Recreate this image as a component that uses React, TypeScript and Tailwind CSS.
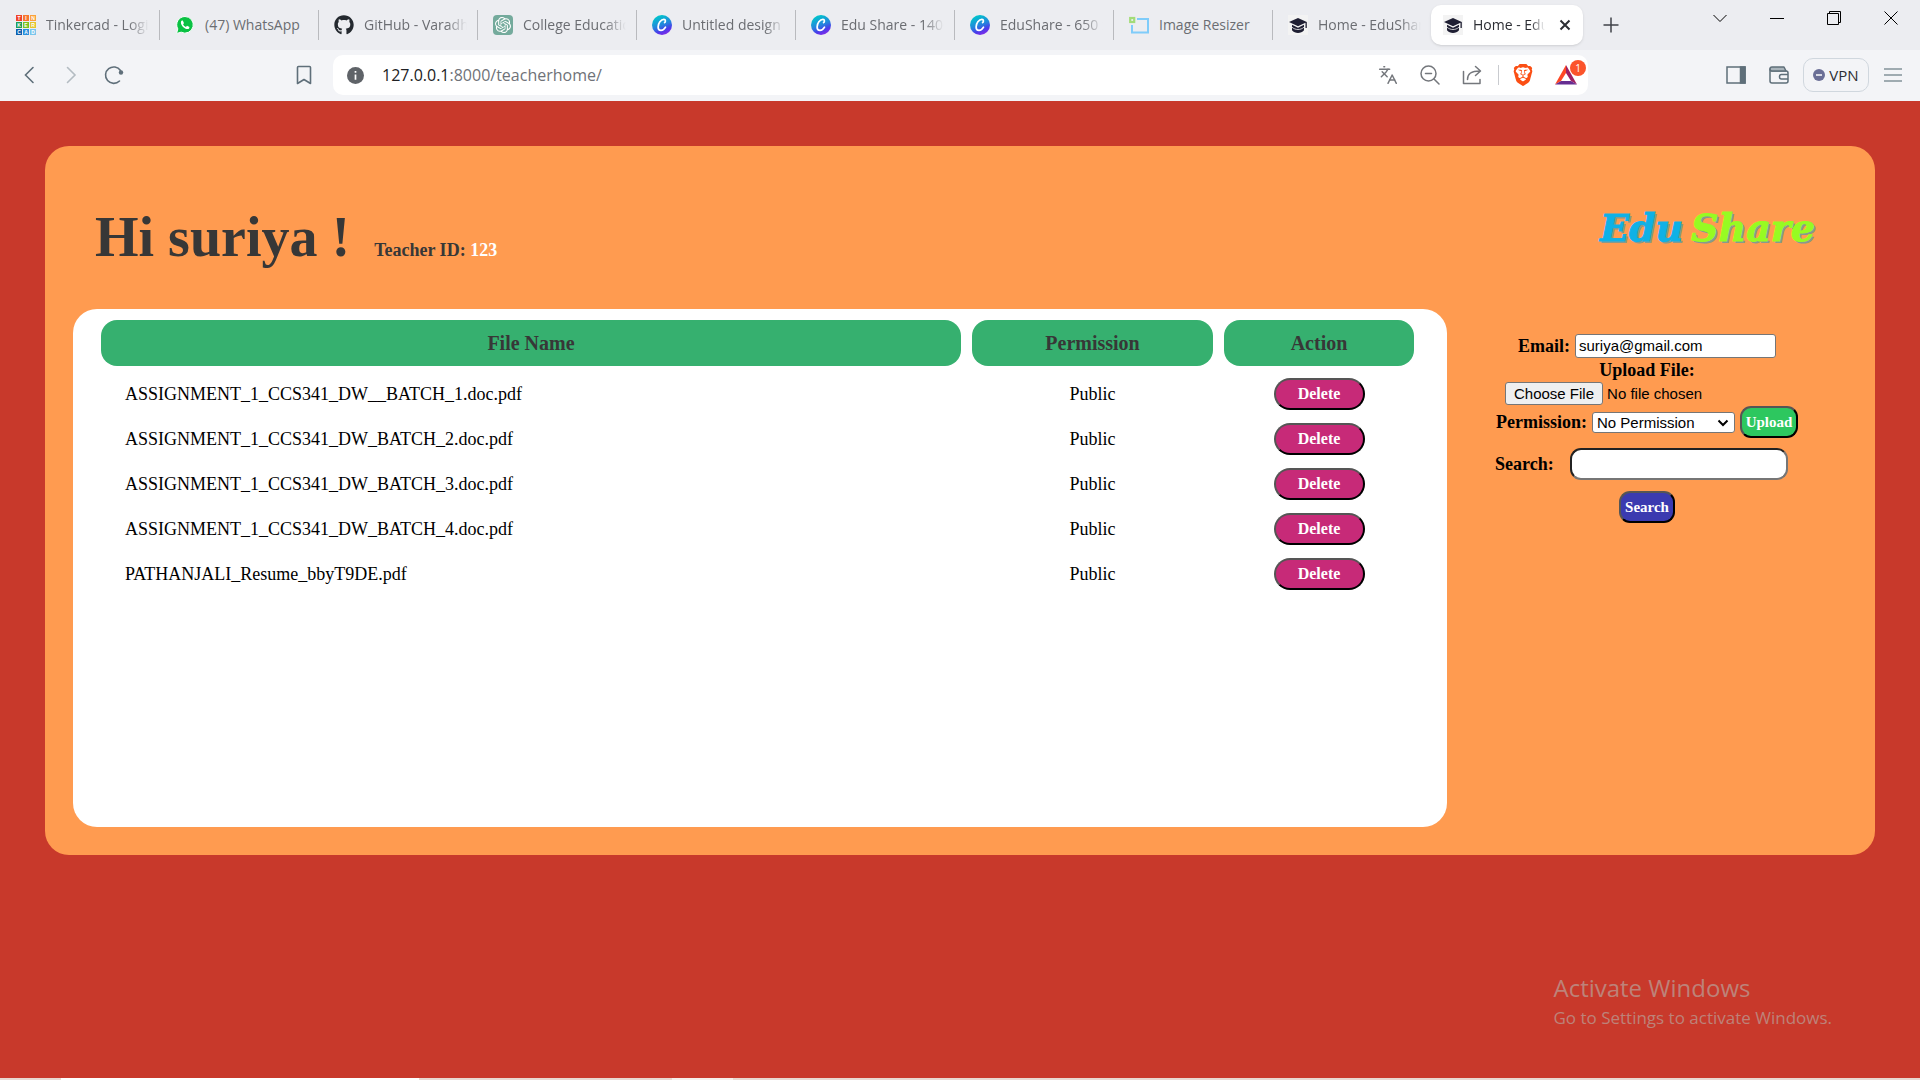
import React from "react";
import { FaGithub } from "react-icons/fa";
import { SiBrave, SiOpenai } from "react-icons/si";
import { Languages } from "lucide-react";

const TINKER: [string, string][] = [
  ["T", "#f0432a"], ["I", "#f7772f"], ["N", "#fba23c"],
  ["K", "#1f9d55"], ["E", "#7cc21e"], ["R", "#e4c62d"],
  ["C", "#0e5fae"], ["A", "#2b8fdc"], ["D", "#79c5ec"],
];

function TinkercadIcon() {
  return (
    <svg viewBox="0 0 20 20" className="size-5 shrink-0" aria-hidden="true">
      {TINKER.map(([letter, color], i) => (
        <g key={letter}>
          <rect x={(i % 3) * 7} y={Math.floor(i / 3) * 7} width="6" height="6" fill={color} />
          <text
            x={(i % 3) * 7 + 3}
            y={Math.floor(i / 3) * 7 + 5}
            fontSize="5"
            fontWeight="700"
            fontFamily="Liberation Sans, sans-serif"
            textAnchor="middle"
            fill="#fff"
          >
            {letter}
          </text>
        </g>
      ))}
    </svg>
  );
}

function WhatsAppIcon() {
  return (
    <svg viewBox="0 0 20 20" className="size-5 shrink-0" aria-hidden="true">
      <path d="M10 1.5a8.3 8.3 0 0 0-7.2 12.4L1.6 18.4l4.6-1.2A8.3 8.3 0 1 0 10 1.5z" fill="#0ac143" stroke="#fff" strokeWidth="1" />
      <path d="M7.3 5.6c-.5 0-1.4.6-1.4 1.9 0 3 3.7 6.6 6.5 6.6 1.3 0 2-.9 2-1.7 0-.3-.1-.5-.3-.6l-1.7-.9c-.3-.1-.5 0-.7.2l-.7.8c-1.3-.5-2.3-1.4-2.9-2.700l.7-.8c.1-.2.1-.4 0-.6l-.8-1.800c-.1-.3-.3-.4-.7-.4z" fill="#fff" />
    </svg>
  );
}

function OpenAiIcon() {
  return (
    <span className="flex size-5 shrink-0 items-center justify-center rounded-sm bg-[#74aa9c] text-white">
      <SiOpenai className="size-4" />
    </span>
  );
}

function CanvaIcon() {
  const id = React.useId();
  return (
    <svg viewBox="0 0 20 20" className="size-5 shrink-0" aria-hidden="true">
      <defs>
        <linearGradient id={id} x1="0.3" y1="0" x2="0.7" y2="1">
          <stop offset="0.05" stopColor="#00c4cc" />
          <stop offset="0.5" stopColor="#2485dd" />
          <stop offset="0.75" stopColor="#4a3bea" />
          <stop offset="1" stopColor="#8a2be8" />
        </linearGradient>
      </defs>
      <circle cx="10" cy="10" r="10" fill={`url(#${id})`} />
      <path
        d="M12.600 7.600c1-.5 1.400-3.300-.7-3.300-3 0-5.800 4.200-5.800 7.600 0 2.200 1.100 3.500 2.900 3.500 2 0 3.600-1.500 4.500-3.200"
        fill="none"
        stroke="#fff"
        strokeWidth="1.700"
        strokeLinecap="round"
      />
    </svg>
  );
}

function ResizerIcon() {
  return (
    <svg viewBox="0 0 20 20" className="size-5 shrink-0" aria-hidden="true" fill="none">
      <path d="M8 4h11v13.500H3V10" stroke="#7fccfa" strokeWidth="2" />
      <rect x="1.200" y="3" width="4" height="4" stroke="#a3dc78" strokeWidth="2.200" />
    </svg>
  );
}

function CapIcon() {
  return (
    <span className="flex size-5 shrink-0 items-center justify-center bg-[#f3f3f3] text-[#1f1f33]">
      <svg viewBox="0 0 20 20" className="size-5" aria-hidden="true" fill="currentColor">
        <path d="M10 3 1 7l9 4.200L17.500 7.800V13h1.300V7L10 3z" />
        <path d="M4 9.800v5.400C5.500 17 7.600 18 10 18s4.500-1 6-2.800V9.800l-6 2.900-6-2.900z" />
        <path d="M4 12.200c1.800 1.600 3.800 2.300 6 2.300s4.200-.7 6-2.300" stroke="#f1f1f1" strokeWidth="0.800" fill="none" />
      </svg>
    </span>
  );
}

const TABS: { label: string; icon: React.ReactNode }[] = [
  { label: "Tinkercad - Login", icon: <TinkercadIcon /> },
  { label: "(47) WhatsApp", icon: <WhatsAppIcon /> },
  { label: "GitHub - Varadha", icon: <FaGithub className="size-5 shrink-0 text-[#24292f]" /> },
  { label: "College Education", icon: <OpenAiIcon /> },
  { label: "Untitled design", icon: <CanvaIcon /> },
  { label: "Edu Share - 1400", icon: <CanvaIcon /> },
  { label: "EduShare - 650 x", icon: <CanvaIcon /> },
  { label: "Image Resizer", icon: <ResizerIcon /> },
  { label: "Home - EduShare", icon: <CapIcon /> },
];

const FADE = "[mask-image:linear-gradient(to_right,black_80%,transparent)]";

function TabStrip() {
  return (
    <div className="flex h-[50px] items-center bg-[#ecedf1] text-sm text-[#6b6d72]">
      {TABS.map((tab, i) => (
        <button
          key={i}
          type="button"
          className={
            "flex h-[30px] w-[159px] min-w-0 items-center gap-2.5 border-l pr-2.5 pl-[15px] text-left " +
            (i > 0 ? "border-[#b9babe]" : "border-transparent")
          }
        >
          {tab.icon}
          <span className={"min-w-0 flex-1 overflow-hidden whitespace-nowrap " + (tab.label.length > 14 ? FADE : "")}>
            {tab.label}
          </span>
        </button>
      ))}
      <div className="flex h-10 w-[152px] min-w-0 items-center gap-2.5 rounded-[10px] bg-white pr-3 pl-3 text-[#2b2d33] shadow-sm">
        <CapIcon />
        <span className={"min-w-0 flex-1 overflow-hidden whitespace-nowrap " + FADE}>Home - EduShare</span>
        <button type="button" aria-label="Close tab" className="ml-1 shrink-0">
          <svg viewBox="0 0 12 12" className="size-3" fill="none" stroke="#2b2d33" strokeWidth="2">
            <path d="M1.500 1.500l9 9M10.500 1.500l-9 9" />
          </svg>
        </button>
      </div>
      <button type="button" aria-label="New tab" className="ml-5">
        <svg viewBox="0 0 16 16" className="size-4" fill="none" stroke="#3f4248" strokeWidth="1.500">
          <path d="M8 .500v15M.500 8h15" />
        </svg>
      </button>
      <div className="ml-auto flex items-center gap-[43px] self-start pt-[11px] pr-[22px] text-black">
        <button type="button" aria-label="Search tabs">
          <svg viewBox="0 0 14 14" className="size-3.5" fill="none" stroke="currentColor">
            <path d="M.500 4l6.500 6.500L13.500 4" />
          </svg>
        </button>
        <button type="button" aria-label="Minimize">
          <svg viewBox="0 0 14 14" className="size-3.5" fill="none" stroke="currentColor">
            <path d="M0 7.500h14" />
          </svg>
        </button>
        <button type="button" aria-label="Restore">
          <svg viewBox="0 0 14 14" className="size-3.5" fill="none" stroke="currentColor">
            <path d="M.500 2.500h11v11H.500zM2.500 2.500v-2h11v11h-2" />
          </svg>
        </button>
        <button type="button" aria-label="Close window">
          <svg viewBox="0 0 14 14" className="size-3.5" fill="none" stroke="currentColor">
            <path d="M.500.500l13 13M13.500.500l-13 13" />
          </svg>
        </button>
      </div>
    </div>
  );
}

function Toolbar() {
  return (
    <div className="flex h-[51px] items-center bg-[#f3f4f7] pb-px text-[#5f6f7a]">
      <button type="button" aria-label="Back" className="ml-5">
        <svg viewBox="0 0 18 18" className="size-[18px]" fill="none" stroke="currentColor" strokeWidth="1.600" strokeLinecap="round">
          <path d="M13 1.500L5.500 9l7.500 7.500" />
        </svg>
      </button>
      <button type="button" aria-label="Forward" className="ml-6 text-[#b4bcc2]">
        <svg viewBox="0 0 18 18" className="size-[18px]" fill="none" stroke="currentColor" strokeWidth="1.600" strokeLinecap="round">
          <path d="M5.500 1.500L13 9l-7.500 7.500" />
        </svg>
      </button>
      <button type="button" aria-label="Reload" className="ml-6">
        <svg viewBox="0 0 20 20" className="size-5" fill="none" stroke="currentColor" strokeWidth="1.600" strokeLinecap="round">
          <path d="M15.500 16A8.200 8.200 0 1 1 16.500 5.500" />
          <circle cx="17" cy="7.500" r="2.200" fill="currentColor" stroke="none" />
        </svg>
      </button>
      <button type="button" aria-label="Bookmark" className="ml-[170px]">
        <svg viewBox="0 0 20 20" className="size-5" fill="none" stroke="currentColor" strokeWidth="1.600" strokeLinejoin="round">
          <path d="M3.500 2.500a1 1 0 0 1 1-1h11a1 1 0 0 1 1 1v16L10 14.500 3.500 18.500z" />
        </svg>
      </button>
      <div className="ml-[19px] flex h-10 min-w-0 flex-1 items-center rounded-[10px] bg-white pr-2.5 pl-3.5">
        <svg viewBox="0 0 18 18" className="size-[17px] shrink-0" aria-hidden="true">
          <circle cx="9" cy="9" r="9" fill="#5f6368" />
          <path d="M9 4.200v2M9 8v5.500" stroke="#fff" strokeWidth="1.800" />
        </svg>
        <p className="ml-[18px] flex-1 truncate text-base text-[#6f7278]">
          <span className="text-[#202124]">127.0.0.1</span>:8000/teacherhome/
        </p>
        <div className="flex items-center text-[#74777c]">
          <button type="button" aria-label="Translate">
            <Languages className="size-5" strokeWidth={1.75} />
          </button>
          <button type="button" aria-label="Zoom" className="ml-[22px]">
            <svg viewBox="0 0 20 20" className="size-5" fill="none" stroke="currentColor" strokeWidth="1.500" strokeLinecap="round">
              <circle cx="8.500" cy="8.500" r="7.500" />
              <path d="M14 14l5 5M5.500 8.500h6" />
            </svg>
          </button>
          <button type="button" aria-label="Share" className="ml-[22px]">
            <svg viewBox="0 0 20 20" className="size-5" fill="none" stroke="currentColor" strokeWidth="1.500" strokeLinecap="round" strokeLinejoin="round">
              <path d="M1.500 6.500v12h16.500v-4M5.500 14.500c0-5.500 3-8.500 12.500-8.500M13.500 1.500L18.500 6l-5 4.500" />
            </svg>
          </button>
          <span className="ml-4 h-5 w-px bg-[#c9cbcf]" />
          <button type="button" aria-label="Brave Shields" className="ml-[13px]">
            <SiBrave className="size-[22px] text-[#fb4f14]" />
          </button>
          <button type="button" aria-label="Brave Rewards" className="relative ml-5">
            <svg viewBox="0 0 24 22" className="h-[22px] w-6" aria-hidden="true">
              <path d="M12 1L1 20.500l6-3.500 5-8z" fill="#ff4724" />
              <path d="M12 1l11 19.500-6-3.500-5-8z" fill="#9e1f63" />
              <path d="M1 20.500h22L17 17H7z" fill="#662d91" />
            </svg>
            <span className="absolute -top-1 -right-2 flex size-4 items-center justify-center rounded-full bg-[#fb542b] text-[10px] text-white">
              1
            </span>
          </button>
        </div>
      </div>
      <button type="button" aria-label="Sidebar" className="ml-[138px]">
        <svg viewBox="0 0 20 20" className="size-5" fill="none" stroke="currentColor" strokeWidth="1.500">
          <rect x="1" y="2" width="18" height="16" />
          <path d="M14.500 2H19v16h-4.500z" fill="currentColor" />
        </svg>
      </button>
      <button type="button" aria-label="Wallet" className="ml-[23px]">
        <svg viewBox="0 0 20 20" className="size-5" fill="none" stroke="currentColor" strokeWidth="1.500" strokeLinejoin="round">
          <path d="M1 4v12a2 2 0 0 0 2 2h14a2 2 0 0 0 2-2V8a2 2 0 0 0-2-2H3a2 2 0 0 1-2-2z" />
          <path d="M1 4a2 2 0 0 1 2-2h12l2 4H3a2 2 0 0 1-2-2z" fill="#a9b4bb" />
          <path d="M19 9.500h-6.500a2 2 0 0 0-2 2v.500a2 2 0 0 0 2 2H19" />
        </svg>
      </button>
      <button
        type="button"
        className="ml-3.5 flex h-[34px] w-[66px] items-center justify-center gap-1 rounded-[10px] border border-[#d0d7de] text-[15px] text-[#2b2d33]"
      >
        <svg viewBox="0 0 12 12" className="size-3" aria-hidden="true">
          <circle cx="6" cy="6" r="6" fill="#6b6f96" />
          <path d="M3 6h6" stroke="#fff" strokeWidth="1.500" />
        </svg>
        VPN
      </button>
      <button type="button" aria-label="Menu" className="mr-[18px] ml-[15px]">
        <svg viewBox="0 0 18 14" className="h-3.5 w-[18px]" fill="none" stroke="#84929b" strokeWidth="1.500">
          <path d="M0 1h18M0 7h18M0 13h18" />
        </svg>
      </button>
    </div>
  );
}

const FILES = [
  "ASSIGNMENT_1_CCS341_DW__BATCH_1.doc.pdf",
  "ASSIGNMENT_1_CCS341_DW_BATCH_2.doc.pdf",
  "ASSIGNMENT_1_CCS341_DW_BATCH_3.doc.pdf",
  "ASSIGNMENT_1_CCS341_DW_BATCH_4.doc.pdf",
  "PATHANJALI_Resume_bbyT9DE.pdf",
];

const BEVEL = "border-2 border-t-[#555] border-r-black border-b-black border-l-[#555]";
const TH = "h-[46px] rounded-2xl bg-[#36b06f] p-0 text-center text-xl font-bold text-[#373737]";

function FileTable() {
  return (
    <table className="w-full table-fixed border-separate border-spacing-[11px] text-lg/[34px] text-black">
      <colgroup>
        <col />
        <col className="w-[241px]" />
        <col className="w-[190px]" />
      </colgroup>
      <thead>
        <tr>
          <th scope="col" className={TH}>File Name</th>
          <th scope="col" className={TH}>Permission</th>
          <th scope="col" className={TH}>Action</th>
        </tr>
      </thead>
      <tbody>
        {FILES.map((name) => (
          <tr key={name}>
            <td className="truncate py-0 pr-0 pl-6">{name}</td>
            <td className="p-0 text-center">Public</td>
            <td className="p-0">
              <button
                type="button"
                className={"mx-auto block h-8 w-[91px] rounded-2xl bg-[#c72a78] text-base/7 font-bold text-white " + BEVEL}
              >
                Delete
              </button>
            </td>
          </tr>
        ))}
      </tbody>
    </table>
  );
}

const FIELD = "rounded-[3px] border border-[#767676] bg-white font-[Liberation_Sans,Arial,sans-serif] text-[15px] font-normal text-black";

function SideForms() {
  return (
    <aside className="mx-6 w-[352px] shrink-0 pt-[25px] text-lg/6 font-bold text-black">
      <form className="flex flex-col">
        <div className="flex items-center justify-center gap-[5px]">
          <label htmlFor="email">Email:</label>
          <input id="email" type="email" defaultValue="suriya@gmail.com" className={"h-6 w-[201px] px-[3px] " + FIELD} />
        </div>
        <label htmlFor="upload" className="text-center">Upload File:</label>
        <input
          id="upload"
          type="file"
          className="ml-[34px] h-6 w-[284px] font-[Liberation_Sans,Arial,sans-serif] text-[15px] leading-[22px] font-normal file:mr-1 file:h-[23px] file:rounded-[3px] file:border file:border-solid file:border-[#767676] file:bg-[#efefef] file:px-2 file:text-black"
        />
        <div className="flex items-center justify-center gap-[5px]">
          <label htmlFor="permission">Permission:</label>
          <div className="relative">
            <select id="permission" className={"block h-[21px] w-[143px] appearance-none pr-5 pl-1 leading-[19px] " + FIELD}>
              <option>No Permission</option>
              <option>Public</option>
            </select>
            <svg viewBox="0 0 12 8" className="pointer-events-none absolute top-[7px] right-1.5 h-2 w-3" fill="none" stroke="#000" strokeWidth="2">
              <path d="M1.500 1.500L6 6l4.500-4.500" />
            </svg>
          </div>
          <button type="button" className={"h-8 w-[58px] rounded-[11px] bg-[#2dc75f] text-[15px]/7 text-white " + BEVEL}>
            Upload
          </button>
        </div>
      </form>
      <form className="mt-2.5 flex flex-col items-center gap-[11px]">
        <div className="flex w-full items-center pl-6">
          <label htmlFor="search" className="w-[75px]">Search:</label>
          <input
            id="search"
            type="text"
            className="h-8 w-[218px] rounded-[11px] border-2 border-t-[#222] border-r-[#767676] border-b-[#767676] border-l-[#222] bg-white px-2 text-base font-normal"
          />
        </div>
        <button type="button" className={"h-8 w-14 rounded-[11px] bg-[#3b3ab0] text-[15px]/7 text-white " + BEVEL}>
          Search
        </button>
      </form>
    </aside>
  );
}

export default function App() {
  return (
    <div className="flex min-h-screen flex-col bg-[#c8392b]">
      <header className="font-['Open_Sans',sans-serif]">
        <TabStrip />
        <Toolbar />
      </header>
      <main className="flex flex-1 flex-col font-[Liberation_Serif,Times,serif]">
        <section className="mx-[45px] mt-[45px] rounded-3xl bg-[#ff9b50] px-7 pb-7">
          <div className="flex h-[163px] items-start justify-between pr-8 pl-[22px]">
            <div className="flex items-baseline gap-6 pt-[57px] text-[#373737]">
              <h1 className="text-[56px]/[68px] font-bold">Hi suriya !</h1>
              <p className="text-lg font-bold">
                Teacher ID: <span className="text-white">123</span>
              </p>
            </div>
            <div className="flex gap-2 pt-14 font-['DejaVu_Serif',serif] text-[38px]/[52px] font-bold whitespace-nowrap italic [-webkit-text-stroke:1px_currentColor] [text-shadow:2px_2px_0_#869a8e]">
              <span className="text-[#0fb1e6]">Edu</span>
              <span className="text-[#97fb22]">Share</span>
            </div>
          </div>
          <div className="flex items-start">
            <div className="min-h-[518px] min-w-0 flex-1 rounded-3xl bg-white pr-[22px] pl-[17px]">
              <FileTable />
            </div>
            <SideForms />
          </div>
        </section>
        <div className="mt-auto mr-[88px] mb-[46px] self-end font-['Open_Sans',sans-serif] text-[#bd8279]">
          <p className="text-2xl/8">Activate Windows</p>
          <p className="text-[17px]/7">Go to Settings to activate Windows.</p>
        </div>
      </main>
      <div className="flex h-0.5 bg-[#e8d9d1]">
        <div className="ml-[61px] w-[358px] bg-white" />
        <div className="ml-[253px] w-[61px] bg-[#f6efeb]" />
      </div>
    </div>
  );
}
